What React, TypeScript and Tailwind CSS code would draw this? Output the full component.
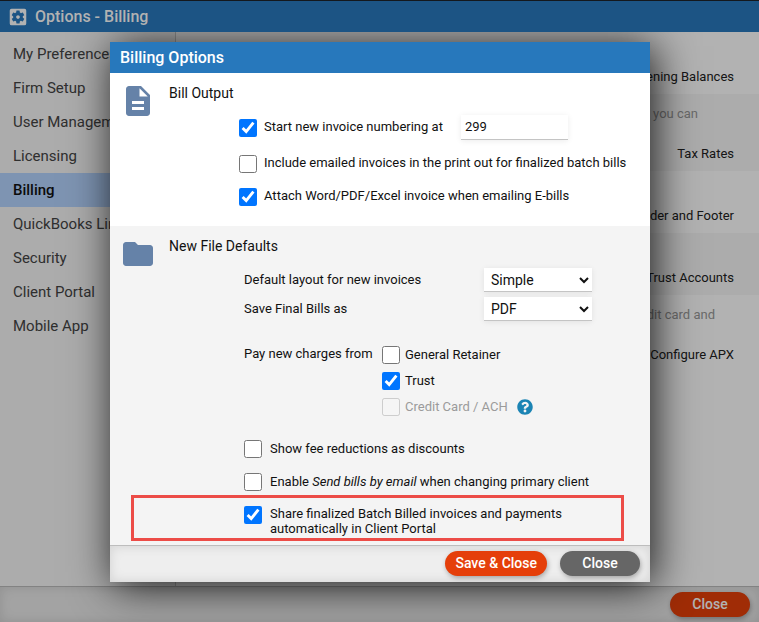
import type { ReactNode } from 'react';
import { MdDescription, MdFolder, MdSettingsApplications } from 'react-icons/md';
import { FaQuestionCircle } from 'react-icons/fa';

const menuItems = [
  'My Preferences',
  'Firm Setup',
  'User Management',
  'Licensing',
  'Billing',
  'QuickBooks Link',
  'Security',
  'Client Portal',
  'Mobile App',
];

const billingRows = [
  { link: 'Opening Balances' },
  { link: 'Tax Rates', note: 'you can', noteClass: 'mr-9' },
  { link: 'Header and Footer' },
  { link: 'Trust Accounts' },
  { link: 'Configure APX', note: 'credit card and', noteClass: 'mr-[19px]' },
];

type CheckProps = {
  children: ReactNode;
  checked?: boolean;
  disabled?: boolean;
  className?: string;
};

function Check({ children, checked, disabled, className = 'gap-[7px] leading-[15px]' }: CheckProps) {
  return (
    <label className={`flex items-start ${disabled ? 'text-[#9b9b9b]' : ''} ${className}`}>
      <input type="checkbox" defaultChecked={checked} disabled={disabled} className="size-[18px] shrink-0" />
      <span>{children}</span>
    </label>
  );
}

function FormatSelect({ id, label, options }: { id: string; label: string; options: string[] }) {
  return (
    <div className="flex items-center">
      <label htmlFor={id} className="w-60">{label}</label>
      <select
        id={id}
        className="h-6 w-[108px] border-b border-[#c4c4c4] bg-white pl-[3px] text-sm leading-5 shadow-[0_1px_6px_rgba(0,0,0,0.08)]"
      >
        {options.map((option) => (
          <option key={option}>{option}</option>
        ))}
      </select>
    </div>
  );
}

function PillButton({ children, className }: { children: ReactNode; className: string }) {
  return (
    <button
      type="button"
      className={`h-[25px] min-w-20 rounded-full px-[10px] pb-px text-sm font-medium shadow-[1px_2px_5px_rgba(0,0,0,0.3)] ${className}`}
    >
      {children}
    </button>
  );
}

function BillingDialog() {
  return (
    <div
      role="dialog"
      aria-label="Billing Options"
      className="w-[540px] bg-white text-[13px] text-[#111] shadow-[4px_4px_40px_rgba(0,0,0,0.85)]"
    >
      <h2 className="bg-[#2778bc] px-[10px] text-base font-medium leading-[31px] text-white">Billing Options</h2>

      {/* Bill output */}
      <section className="flex gap-[13px] px-[10px] pt-[10px] pb-5">
        <MdDescription className="size-9 shrink-0 text-[#6582a8]" />
        <div className="flex-1">
          <h3 className="text-sm leading-5">Bill Output</h3>
          <div className="mt-3 ml-[70px] flex flex-col gap-[15px]">
            <div className="flex items-center gap-[18px]">
              <Check checked>Start new invoice numbering at</Check>
              <input
                type="text"
                aria-label="First invoice number"
                defaultValue="299"
                className="h-[25px] w-[107px] border-b border-[#c4c4c4] px-1 pb-px shadow-[0_1px_6px_rgba(0,0,0,0.08)]"
              />
            </div>
            <Check>Include emailed invoices in the print out for finalized batch bills</Check>
            <Check checked>Attach Word/PDF/Excel invoice when emailing E-bills</Check>
          </div>
        </div>
      </section>

      {/* New file defaults */}
      <section className="bg-[#f4f4f4] pb-1">
        <div className="flex gap-[13px] px-[10px] pt-[10px]">
          <MdFolder className="size-9 shrink-0 text-[#6582a8]" />
          <div className="flex-1">
            <h3 className="text-sm leading-5">New File Defaults</h3>
            <div className="mt-3 ml-[75px]">
              <div className="flex flex-col gap-[5px]">
                <FormatSelect id="layout" label="Default layout for new invoices" options={['Simple', 'Detailed']} />
                <FormatSelect id="format" label="Save Final Bills as" options={['PDF', 'Word']} />
              </div>
              <fieldset className="mt-[25px] flex leading-[15px]">
                <legend className="float-left w-[138px]">Pay new charges from</legend>
                <div className="flex flex-col gap-2">
                  <Check className="gap-[5px] leading-[18px]">General Retainer</Check>
                  <Check checked className="gap-[5px] leading-[18px]">Trust</Check>
                  <div className="flex items-center gap-[9px]">
                    <Check disabled className="gap-[5px] leading-[18px]">Credit Card / ACH</Check>
                    <button type="button" aria-label="Help">
                      <FaQuestionCircle className="size-4 text-[#1b84b4]" />
                    </button>
                  </div>
                </div>
              </fieldset>
              <div className="mt-6 flex flex-col gap-[15px]">
                <Check className="gap-2 leading-[18px]">Show fee reductions as discounts</Check>
                <Check className="gap-2 leading-[18px]">
                  Enable <em>Send bills by email</em> when changing primary client
                </Check>
              </div>
            </div>
          </div>
        </div>
        <div className="mt-1 mr-[26px] ml-[21px] border-[3px] border-[#ec4c47] pt-2 pr-10 pb-[2px] pl-[110px]">
          <Check checked className="gap-2 leading-[15px]">
            Share finalized Batch Billed invoices and payments automatically in Client Portal
          </Check>
        </div>
      </section>

      <footer className="flex items-center justify-end gap-[13px] border-t border-[#bdbdbd] bg-[#eee] px-[10px] pt-[5px] pb-[6px] shadow-[inset_0_0_12px_rgba(0,0,0,0.12)]">
        <PillButton className="bg-[#e53f0a] text-white">Save &amp; Close</PillButton>
        <PillButton className="bg-[#666] text-white">Close</PillButton>
      </footer>
    </div>
  );
}

export default function App() {
  return (
    <div className="relative flex min-h-screen flex-col bg-white font-[Roboto,sans-serif]">
      <header className="z-20 flex h-8 items-center gap-[6px] border-t border-[#14181d] bg-[#1c5484] pl-[7px] text-[#b2b2b2]">
        <MdSettingsApplications className="size-[22px]" />
        <h1 className="text-base font-medium">Options - Billing</h1>
      </header>

      <div className="flex flex-1">
        <nav className="w-44 shrink-0 border-r border-[#ccc] bg-[#f6f6f6] pt-[5px] text-[15px]">
          {menuItems.map((item) => (
            <a
              key={item}
              href="#"
              className={`block h-[34px] pl-[13px] leading-[34px] ${
                item === 'Billing' ? 'bg-[#b5d4ff] font-medium text-[#111]' : 'text-[#444]'
              }`}
            >
              {item}
            </a>
          ))}
        </nav>
        <main className="flex-1 text-[13px] leading-[15px]">
          {billingRows.map((row) => (
            <div
              key={row.link}
              className={`flex flex-col items-end justify-end pr-[25px] pb-[10px] even:bg-[#f6f6f6] ${
                row.note ? 'h-[77px]' : 'h-[62px]'
              }`}
            >
              {row.note && <p className={`mb-[25px] text-[#999] ${row.noteClass}`}>{row.note}</p>}
              <a href="#" className="text-[#222]">{row.link}</a>
            </div>
          ))}
        </main>
      </div>

      <footer className="flex h-9 items-center justify-end border-t border-[#bbb] bg-[#eaeaea] pr-[9px] shadow-[inset_0_0_12px_rgba(0,0,0,0.12)]">
        <PillButton className="bg-[#e53f0a] text-white">Close</PillButton>
      </footer>

      <div className="absolute inset-0 z-10 flex items-start justify-center bg-black/30 pt-[42px] pl-px">
        <BillingDialog />
      </div>
    </div>
  );
}
